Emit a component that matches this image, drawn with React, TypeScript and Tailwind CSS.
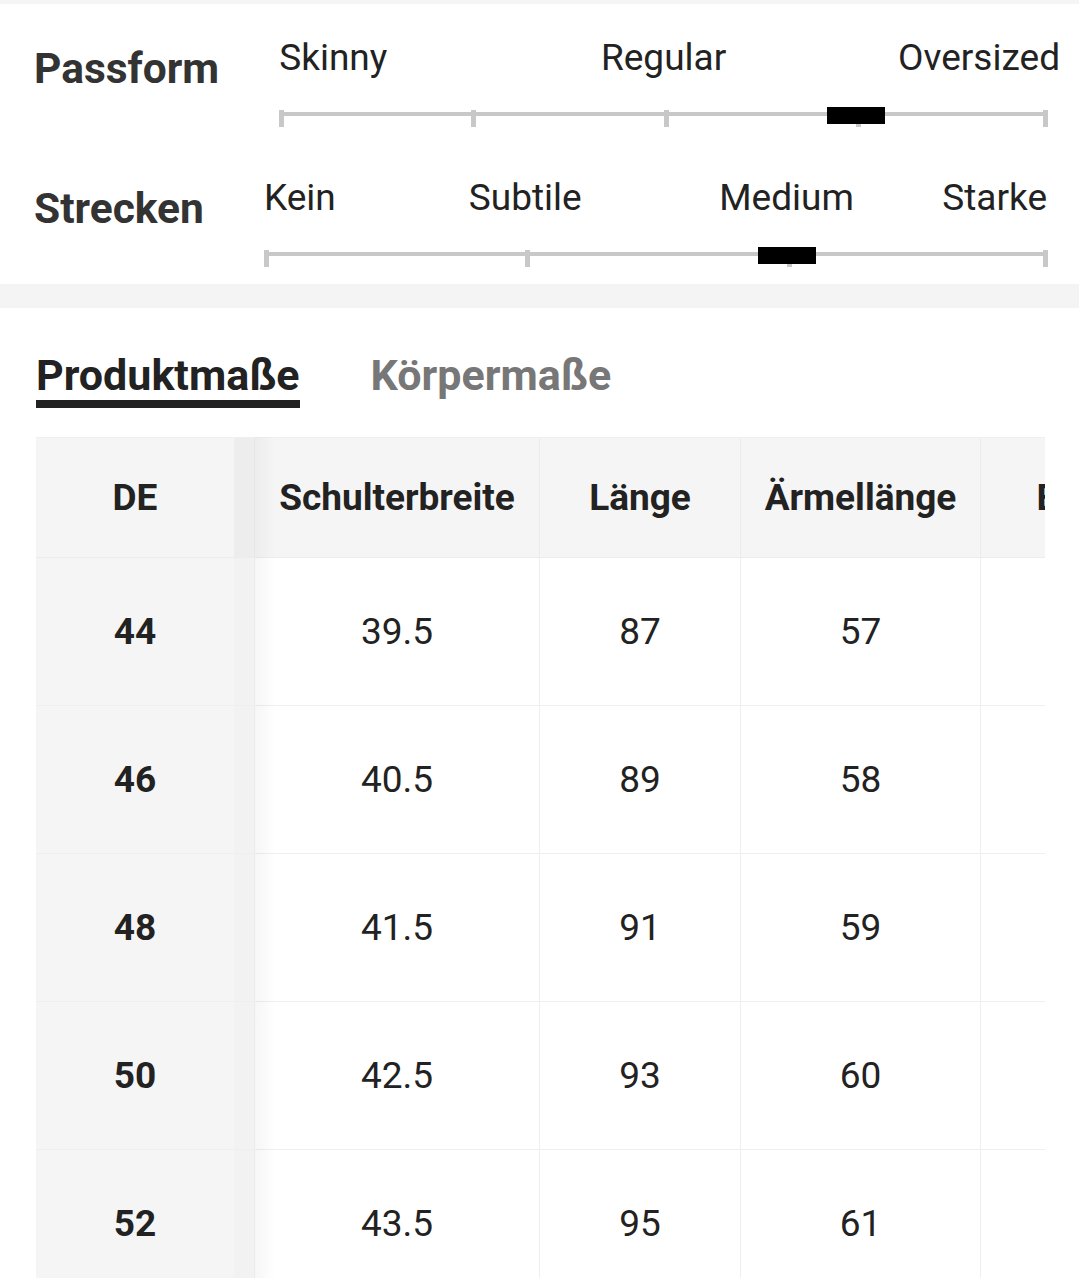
import React from "react";

type SliderProps = {
  labels: { text: string; pos: "left" | "center" | "right"; pct: number; offset?: number }[];
  ticks: number;
  thumbPct: number;
};

function Slider({ labels, ticks, thumbPct }: SliderProps) {
  const tickArr = Array.from({ length: ticks }, (_, i) => i);
  return (
    <div className="flex-1 ml-[60px] pt-[32px]">
      <div className="relative h-[43px] text-[37px] leading-[43px] text-[#222] whitespace-nowrap">
        {labels.map((l) => {
          if (l.pos === "left")
            return (
              <span key={l.text} className="absolute top-0 left-0">
                {l.text}
              </span>
            );
          if (l.pos === "right")
            return (
              <span key={l.text} className="absolute top-0" style={{ right: `${l.offset ?? 0}px` }}>
                {l.text}
              </span>
            );
          return (
            <span
              key={l.text}
              className="absolute top-0 -translate-x-1/2"
              style={{ left: `${l.pct}%` }}
            >
              {l.text}
            </span>
          );
        })}
      </div>
      <div className="relative h-[20px] mt-[28px]">
        <div className="absolute left-0 right-0 top-[5px] h-[4px] bg-[#c8c8c8]" />
        {tickArr.map((i) => {
          const pct = (i / (ticks - 1)) * 100;
          if (i === ticks - 1)
            return <div key={i} className="absolute right-0 top-[3px] h-[17px] w-[5px] bg-[#c8c8c8]" />;
          return (
            <div
              key={i}
              className="absolute top-[3px] h-[17px] w-[5px] bg-[#c8c8c8]"
              style={{ left: `${pct}%` }}
            />
          );
        })}
        <div
          className="absolute top-0 h-[17px] w-[58px] bg-black"
          style={{ left: `calc(${thumbPct}% - 29px)` }}
        />
      </div>
    </div>
  );
}

const cols = [
  { title: "Schulterbreite", w: "w-[284px]", border: false },
  { title: "Länge", w: "w-[201px]", border: true },
  { title: "Ärmellänge", w: "w-[240px]", border: true },
  { title: "Brustumfang", w: "w-[329px]", border: true },
];

const rows = [
  { size: "44", vals: ["39.5", "87", "57", "104"] },
  { size: "46", vals: ["40.5", "89", "58", "108"] },
  { size: "48", vals: ["41.5", "91", "59", "112"] },
  { size: "50", vals: ["42.5", "93", "60", "116"] },
  { size: "52", vals: ["43.5", "95", "61", "120"] },
];

export default function App() {
  return (
    <div className="h-[1278px] w-full overflow-hidden bg-white font-['Roboto',sans-serif]">
      <div className="h-[4px] bg-[#f5f5f5]" />
      {/* Fit section */}
      <div className="pl-[34px] pr-[31px]">
        <div className="flex items-start h-[140px]">
          <div className="mt-[40px] text-[42.5px] leading-[50px] font-bold text-[#333]">Passform</div>
          <Slider
            labels={[
              { text: "Skinny", pos: "left", pct: 0 },
              { text: "Regular", pos: "center", pct: 50 },
              { text: "Oversized", pos: "right", pct: 100, offset: -12 },
            ]}
            ticks={5}
            thumbPct={75}
          />
        </div>
        <div className="flex items-start h-[140px]">
          <div className="mt-[40px] text-[42.5px] leading-[50px] font-bold text-[#333]">Strecken</div>
          <Slider
            labels={[
              { text: "Kein", pos: "left", pct: 0 },
              { text: "Subtile", pos: "center", pct: 33.333 },
              { text: "Medium", pos: "center", pct: 66.667 },
              { text: "Starke", pos: "right", pct: 100, offset: 1 },
            ]}
            ticks={4}
            thumbPct={66.667}
          />
        </div>
      </div>
      <div className="h-[24px] bg-[#f4f4f4]" />

      {/* Tabs */}
      <div className="pl-[36px] pt-[42px] flex gap-[71px] items-start">
        <div className="flex flex-col">
          <span className="text-[43px] leading-[50px] font-bold text-[#222]">Produktmaße</span>
          <div className="h-[8px] bg-[#222]" />
        </div>
        <span className="text-[43px] leading-[50px] font-bold text-[#777]">Körpermaße</span>
      </div>

      {/* Table */}
      <div className="ml-[36px] mt-[29px] w-[1009px] overflow-hidden relative">
        <div className="flex h-[121px] bg-[#f5f5f5] border-t border-[#efefef] border-b border-b-[#ececec]">
          <div className="w-[198px] shrink-0 flex items-center justify-center text-[37px] font-bold text-[#222]">
            DE
          </div>
          <div className="w-[21px] shrink-0 bg-[#ededed] border-r border-[#e6e6e6]" />
          {cols.map((c) => (
            <div
              key={c.title}
              className={`${c.w} shrink-0 flex items-center justify-center text-[37px] font-bold text-[#222] whitespace-nowrap ${
                c.border ? "border-l border-[#ebebeb]" : ""
              }`}
            >
              {c.title}
            </div>
          ))}
        </div>
        {rows.map((r) => (
          <div key={r.size} className="flex h-[148px] border-b border-[#efefef]">
            <div className="w-[198px] shrink-0 bg-[#f5f5f5] flex items-center justify-center text-[37px] font-bold text-[#222]">
              {r.size}
            </div>
            <div className="w-[21px] shrink-0 bg-[#f2f2f2] border-r border-[#ebebeb]" />
            {cols.map((c, i) => (
              <div
                key={c.title}
                className={`${c.w} shrink-0 flex items-center justify-center text-[37px] text-[#222] whitespace-nowrap ${
                  c.border ? "border-l border-[#efefef]" : ""
                }`}
              >
                {r.vals[i]}
              </div>
            ))}
          </div>
        ))}
        <div className="pointer-events-none absolute top-0 bottom-0 left-[219px] w-[20px] bg-linear-to-r from-[rgba(0,0,0,0.035)] to-transparent" />
      </div>
    </div>
  );
}
